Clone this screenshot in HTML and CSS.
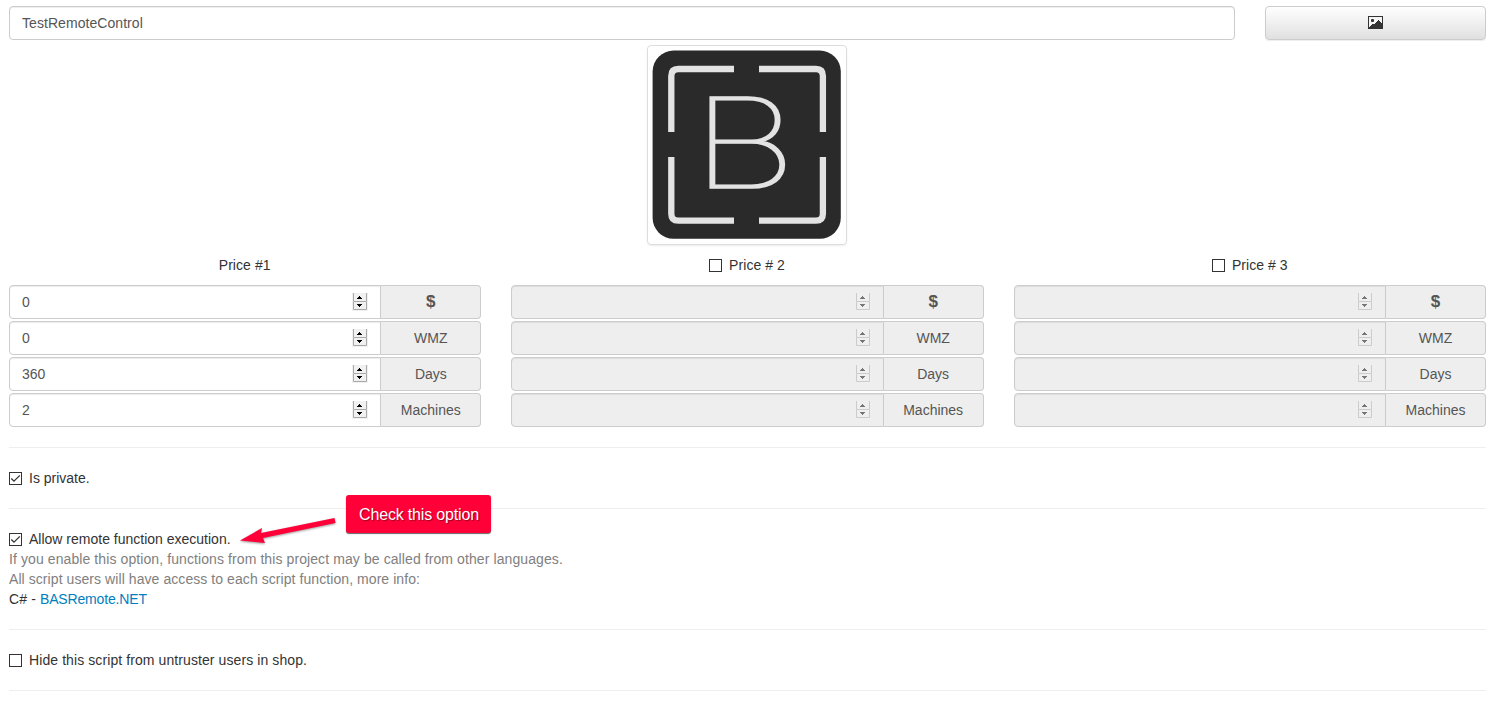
FILE: index.html
```
<!DOCTYPE html>
<html lang="en">
<head>
<meta charset="utf-8">
<title>TestRemoteControl</title>
<link rel="stylesheet" href="styles.css">
</head>
<body>
<svg width="0" height="0" class="defs">
  <symbol id="spin" viewBox="0 0 16 18">
    <rect width="16" height="18" fill="#f1f1f1"/>
    <path d="M1.5 0V8.5H14.5V0M1.5 9V16.5H14.5V9" fill="none" stroke="#a9a9a9"/>
    <path d="M7 3h1v1h1v1h1v1H5V5h1V4h1ZM5 11h5v1H9v1H8v1H7v-1H6v-1H5Z" fill="#000"/>
  </symbol>
  <symbol id="box" viewBox="0 0 13 13"><rect x=".5" y=".5" width="12" height="12" fill="#fff" stroke="#333"/></symbol>
  <symbol id="boxed" viewBox="0 0 13 13"><rect x=".5" y=".5" width="12" height="12" fill="#fff" stroke="#333"/><path d="M2.3 6.5 5 9.2 10.8 3.4" fill="none" stroke="#333" stroke-width="1.3"/></symbol>
</svg>
<main class="page">
  <div class="top">
    <div class="input name"><span class="t-name">TestRemoteControl</span></div>
    <div class="button"><svg width="15" height="13" viewBox="0 0 15 13"><rect width="15" height="13" fill="#333"/><path d="M1 1h13v6h-1V6h-1V5h-1V4h-1v1H9v1H8v1H7v1H6V8H4v1H3v1H2v1H1Z" fill="#f5f5f5"/><rect x="3" y="3" width="3" height="3" rx="1" fill="#333"/></svg></div>
  </div>
  <div class="thumb">
    <svg width="190" height="190" viewBox="0 0 190 190">
      <rect x=".6" y=".6" width="188.2" height="188.2" rx="21" fill="#2a2a2a"/>
      <path d="M19.3 82V26Q19.300 19 26.300 19H82M107 19H164Q170.900 19 170.900 26V82M170.900 107V163.700Q170.900 170.700 164 170.700H107M82 170.700H26.300Q19.300 170.700 19.300 163.700V107" fill="none" stroke="#e3e3e3" stroke-width="6.300"/>
      <text class="logo-letter" transform="translate(40 137.500) scale(1.31 1)">B</text>
    </svg>
  </div>
  <div class="prices">
    <section class="price">
      <div class="heading">Price #1</div>
      <div class="group"><div class="input"><span>0</span><svg class="spin"><use href="#spin"/></svg></div><div class="addon usd">$</div></div>
      <div class="group"><div class="input"><span>0</span><svg class="spin"><use href="#spin"/></svg></div><div class="addon">WMZ</div></div>
      <div class="group"><div class="input"><span>360</span><svg class="spin"><use href="#spin"/></svg></div><div class="addon">Days</div></div>
      <div class="group"><div class="input"><span>2</span><svg class="spin"><use href="#spin"/></svg></div><div class="addon">Machines</div></div>
    </section>
    <section class="price off">
      <div class="heading"><svg class="check"><use href="#box"/></svg>Price # 2</div>
      <div class="group"><div class="input"><span></span><svg class="spin"><use href="#spin"/></svg></div><div class="addon usd">$</div></div>
      <div class="group"><div class="input"><span></span><svg class="spin"><use href="#spin"/></svg></div><div class="addon">WMZ</div></div>
      <div class="group"><div class="input"><span></span><svg class="spin"><use href="#spin"/></svg></div><div class="addon">Days</div></div>
      <div class="group"><div class="input"><span></span><svg class="spin"><use href="#spin"/></svg></div><div class="addon">Machines</div></div>
    </section>
    <section class="price off">
      <div class="heading third"><svg class="check"><use href="#box"/></svg>Price # 3</div>
      <div class="group"><div class="input"><span></span><svg class="spin"><use href="#spin"/></svg></div><div class="addon usd">$</div></div>
      <div class="group"><div class="input"><span></span><svg class="spin"><use href="#spin"/></svg></div><div class="addon">WMZ</div></div>
      <div class="group"><div class="input"><span></span><svg class="spin"><use href="#spin"/></svg></div><div class="addon">Days</div></div>
      <div class="group"><div class="input"><span></span><svg class="spin"><use href="#spin"/></svg></div><div class="addon">Machines</div></div>
    </section>
  </div>
  <div class="option"><div class="line"><svg class="check"><use href="#boxed"/></svg><span>Is private.</span></div></div>
  <div class="option">
    <div class="line"><svg class="check"><use href="#boxed"/></svg><span>Allow remote function execution.</span></div>
    <div class="muted"><span class="t-help1">If you enable this option, functions from this project may be called from other languages.</span></div>
    <div class="muted"><span class="t-help2">All script users will have access to each script function, more info:</span></div>
    <div><span class="t-lang">C# - </span><a class="link">BASRemote.NET</a></div>
  </div>
  <div class="option"><div class="line"><svg class="check"><use href="#box"/></svg><span class="t-hide">Hide this script from untruster users in shop.</span></div></div>
  <div class="option last"></div>
  <svg class="arrow" width="100" height="32" viewBox="0 0 100 32"><path d="M94.500 3 95.500 8 23 23 25 28 0 25.500 22 13 21 18Z" fill="#ff0038"/></svg>
  <div class="callout">Check this option</div>
</main>
</body>
</html>
```
FILE: styles.css
```
* { box-sizing: border-box; }
body { margin: 0; background: #fff; color: #333; font: 14px/20px "Liberation Sans", Arial, sans-serif; }
.defs { position: absolute; }
.page { position: relative; height: 703px; padding: 6px 2px 0 9px; overflow: hidden; }
.top { display: flex; gap: 30px; }
.input { display: flex; align-items: center; justify-content: space-between; flex: 1; height: 34px; padding: 0 12px; border: 1px solid #ccc; border-radius: 4px; background: #fff; color: #555; box-shadow: inset 0 1px 1px rgba(0,0,0,.075); }
.button { display: flex; align-items: center; justify-content: center; width: 221px; height: 34px; padding-bottom: 1px; border: 1px solid #ccc; border-radius: 4px; background: linear-gradient(#fff, #e0e0e0); box-shadow: inset 0 1px 0 rgba(255,255,255,.15), 0 1px 1px rgba(0,0,0,.075); }
.thumb { width: 200px; height: 200px; margin: 5px 0 10px 638px; padding: 4px; border: 1px solid #ddd; border-radius: 4px; box-shadow: 0 1px 2px rgba(0,0,0,.075); }
.thumb svg { display: block; }
.logo-letter { font: 100 125px Inter, sans-serif; fill: #e3e3e3; stroke: #e3e3e3; stroke-width: 1.6px; }
.prices { display: grid; grid-template-columns: repeat(3, 1fr); gap: 30px; }
.heading { display: flex; align-items: center; justify-content: center; height: 20px; margin-bottom: 10px; padding-right: 1px; letter-spacing: .06px; }
.heading.third { padding-right: 0; }
.group { display: flex; height: 34px; }
.group + .group { margin-top: 2px; }
.group .input { border-radius: 4px 0 0 4px; }
.addon { width: 100px; padding-top: 6px; border: 1px solid #ccc; border-left: 0; border-radius: 0 4px 4px 0; background: #eee; color: #555; text-align: center; }
.usd { font-size: 17px; font-weight: bold; }
.off .input { background: #eee; }
.spin { width: 16px; height: 18px; }
.off .spin { opacity: .5; }
.check { width: 13px; height: 13px; margin-right: 7px; }
.option { margin-top: 20px; padding-top: 20px; border-top: 1px solid #eee; }
.line { display: flex; align-items: center; height: 20px; }
.muted { color: #808080; }
.t-name { letter-spacing: .06px; }
.t-help1 { letter-spacing: .093px; }
.t-help2 { letter-spacing: .07px; }
.t-hide { letter-spacing: .09px; }
.t-lang { letter-spacing: .12px; }
.link { color: #007fbf; letter-spacing: -.16px; }
.arrow { position: absolute; left: 240px; top: 515px; filter: drop-shadow(0 1px 1px rgba(0,0,0,.4)); }
.callout { position: absolute; left: 346px; top: 495px; width: 145px; height: 38px; padding-left: 1px; border-radius: 3px; background: #ff0038; box-shadow: 0 1px 1px rgba(0,0,0,.6); color: #fff; font-size: 16px; letter-spacing: -.17px; line-height: 39px; text-align: center; text-shadow: 1px 1px 1px rgba(0,0,0,.4); }
```
